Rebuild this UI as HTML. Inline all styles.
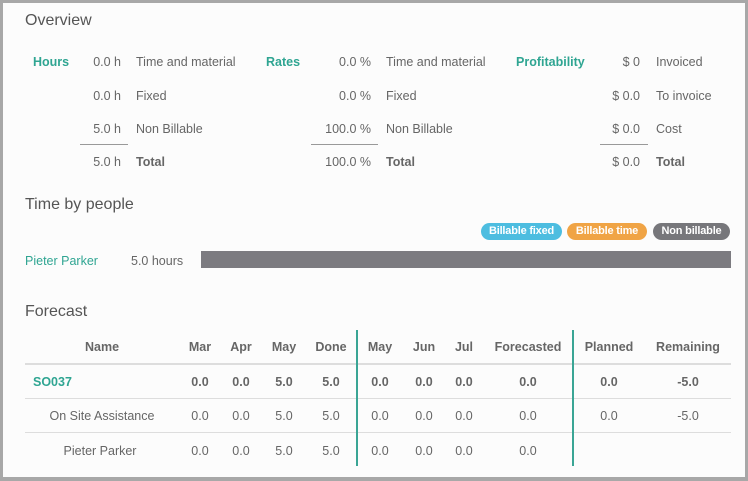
<!DOCTYPE html>
<html><head><style>
body{margin:0;width:748px;height:481px;background:#a8a8a8;position:relative;overflow:hidden;font-family:"Liberation Sans",sans-serif;color:#666;font-size:12.5px}
#p{position:absolute;left:3px;top:3px;width:742px;height:474px;background:#fcfcfc}
.a{position:absolute;white-space:nowrap;line-height:16px;transform:translateY(1px)}
.c{position:absolute;white-space:nowrap;line-height:16px;transform:translate(-50%,1px)}
.r{position:absolute;white-space:nowrap;line-height:16px;transform:translate(-100%,1px)}
.h{font-size:16px;color:#555}
.t{color:#2fa592;font-weight:bold}
.b{font-weight:bold}
.ln{position:absolute;height:1px;background:#999}
.gl{position:absolute;left:25px;width:706px;height:1px;background:#ddd}
.vl{position:absolute;width:2px;background:#3aa595;top:330px;height:136px}
.badge{position:absolute;top:223px;height:17px;line-height:17px;border-radius:9px;color:#fff;font-weight:bold;font-size:11px;letter-spacing:-0.2px;text-align:center}
</style></head><body><div id="p"></div>
<div class="a h" style="left:25px;top:12px">Overview</div>
<div class="a t" style="left:33px;top:53px">Hours</div>
<div class="r" style="left:121px;top:53px">0.0 h</div><div class="a" style="left:136px;top:53px">Time and material</div>
<div class="r" style="left:121px;top:87px">0.0 h</div><div class="a" style="left:136px;top:87px">Fixed</div>
<div class="r" style="left:121px;top:120px">5.0 h</div><div class="a" style="left:136px;top:120px">Non Billable</div>
<div class="ln" style="left:80px;top:144px;width:48px"></div>
<div class="r" style="left:121px;top:153px">5.0 h</div><div class="a b" style="left:136px;top:153px">Total</div>
<div class="a t" style="left:266px;top:53px">Rates</div>
<div class="r" style="left:371px;top:53px">0.0 %</div><div class="a" style="left:386px;top:53px">Time and material</div>
<div class="r" style="left:371px;top:87px">0.0 %</div><div class="a" style="left:386px;top:87px">Fixed</div>
<div class="r" style="left:371px;top:120px">100.0 %</div><div class="a" style="left:386px;top:120px">Non Billable</div>
<div class="ln" style="left:311px;top:144px;width:67px"></div>
<div class="r" style="left:371px;top:153px">100.0 %</div><div class="a b" style="left:386px;top:153px">Total</div>
<div class="a t" style="left:516px;top:53px">Profitability</div>
<div class="r" style="left:640px;top:53px">$ 0</div><div class="a" style="left:656px;top:53px">Invoiced</div>
<div class="r" style="left:640px;top:87px">$ 0.0</div><div class="a" style="left:656px;top:87px">To invoice</div>
<div class="r" style="left:640px;top:120px">$ 0.0</div><div class="a" style="left:656px;top:120px">Cost</div>
<div class="ln" style="left:600px;top:144px;width:48px"></div>
<div class="r" style="left:640px;top:153px">$ 0.0</div><div class="a b" style="left:656px;top:153px">Total</div>
<div class="a h" style="left:25px;top:196px">Time by people</div>
<div class="badge" style="left:481px;width:81px;background:#4dbde0">Billable fixed</div>
<div class="badge" style="left:567px;width:80px;background:#f0a445">Billable time</div>
<div class="badge" style="left:653px;width:77px;background:#77777b">Non billable</div>
<div class="a" style="left:25px;top:252px;color:#2fa592">Pieter Parker</div>
<div class="a" style="left:131px;top:252px">5.0 hours</div>
<div style="position:absolute;left:201px;top:251px;width:530px;height:17px;background:#7c7b80"></div>
<div class="a h" style="left:25px;top:303px">Forecast</div>
<div class="gl" style="top:363px;height:2px"></div><div class="gl" style="top:398px"></div><div class="gl" style="top:432px"></div>
<div class="vl" style="left:356px"></div><div class="vl" style="left:572px"></div>
<div class="c b" style="left:102px;top:338px">Name</div>
<div class="c b" style="left:200px;top:338px">Mar</div><div class="c b" style="left:241px;top:338px">Apr</div><div class="c b" style="left:284px;top:338px">May</div><div class="c b" style="left:331px;top:338px">Done</div>
<div class="c b" style="left:380px;top:338px">May</div><div class="c b" style="left:424px;top:338px">Jun</div><div class="c b" style="left:464px;top:338px">Jul</div><div class="c b" style="left:528px;top:338px">Forecasted</div>
<div class="c b" style="left:609px;top:338px">Planned</div><div class="c b" style="left:688px;top:338px">Remaining</div>
<div class="a t" style="left:33px;top:373px">SO037</div>
<div class="c b" style="left:200px;top:373px">0.0</div><div class="c b" style="left:241px;top:373px">0.0</div><div class="c b" style="left:284px;top:373px">5.0</div><div class="c b" style="left:331px;top:373px">5.0</div>
<div class="c b" style="left:380px;top:373px">0.0</div><div class="c b" style="left:424px;top:373px">0.0</div><div class="c b" style="left:464px;top:373px">0.0</div><div class="c b" style="left:528px;top:373px">0.0</div>
<div class="c b" style="left:609px;top:373px">0.0</div><div class="c b" style="left:688px;top:373px">-5.0</div>
<div class="c" style="left:102px;top:407px">On Site Assistance</div>
<div class="c" style="left:200px;top:407px">0.0</div><div class="c" style="left:241px;top:407px">0.0</div><div class="c" style="left:284px;top:407px">5.0</div><div class="c" style="left:331px;top:407px">5.0</div>
<div class="c" style="left:380px;top:407px">0.0</div><div class="c" style="left:424px;top:407px">0.0</div><div class="c" style="left:464px;top:407px">0.0</div><div class="c" style="left:528px;top:407px">0.0</div>
<div class="c" style="left:609px;top:407px">0.0</div><div class="c" style="left:688px;top:407px">-5.0</div>
<div class="c" style="left:100px;top:442px">Pieter Parker</div>
<div class="c" style="left:200px;top:442px">0.0</div><div class="c" style="left:241px;top:442px">0.0</div><div class="c" style="left:284px;top:442px">5.0</div><div class="c" style="left:331px;top:442px">5.0</div>
<div class="c" style="left:380px;top:442px">0.0</div><div class="c" style="left:424px;top:442px">0.0</div><div class="c" style="left:464px;top:442px">0.0</div><div class="c" style="left:528px;top:442px">0.0</div>
</body></html>
